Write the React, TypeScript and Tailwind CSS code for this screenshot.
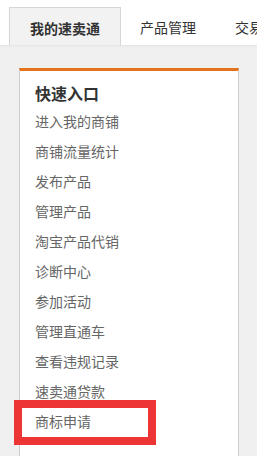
const links = [
  "进入我的商铺",
  "商铺流量统计",
  "发布产品",
  "管理产品",
  "淘宝产品代销",
  "诊断中心",
  "参加活动",
  "管理直通车",
  "查看违规记录",
  "速卖通贷款",
  "商标申请"
];

const tabs = ["我的速卖通", "产品管理", "交易"];

export default function App() {
  return (
    <div
      className="relative h-[456px] w-[257px] overflow-hidden bg-[#f0f0f0]"
      style={{ fontFamily: '"Noto Sans CJK SC", "Noto Sans", sans-serif' }}
    >
      {/* top nav */}
      <div className="flex h-[45px] items-end bg-white pl-[9px] shadow-[0_1px_2px_rgba(0,0,0,0.06)]">
        {tabs.map((tab, i) =>
          i === 0 ? (
            <div
              key={tab}
              className="flex h-[38px] w-[112px] shrink-0 items-center justify-center border-x border-t border-[#d6d6d6] bg-[#f2f2f2] pt-[3px] text-[14px] font-bold text-[#333]"
            >
              {tab}
            </div>
          ) : (
            <div
              key={tab}
              className="flex h-[38px] shrink-0 items-center whitespace-nowrap pl-[19px] pr-[20px] pt-[3px] text-[14px] text-[#333]"
            >
              {tab}
            </div>
          )
        )}
      </div>

      {/* quick entry card */}
      <div className="ml-[19px] mt-[23px] h-[400px] w-[220px] border-x border-[#cfcfcf] border-t-[3px] border-t-[#e5731e] bg-white pl-[15px]">
        <div className="pt-[10px] text-[16px] font-bold leading-[24px] text-[#333]">快速入口</div>
        <ul className="mt-[1px]">
          {links.map((link) => (
            <li key={link} className="h-[30px] text-[14px] leading-[30px] text-[#666]">
              {link}
            </li>
          ))}
        </ul>
      </div>

      {/* highlight box */}
      <div className="absolute left-[14px] top-[400px] h-[45px] w-[142px] border-[8px] border-[#ee3535]" />
    </div>
  );
}
